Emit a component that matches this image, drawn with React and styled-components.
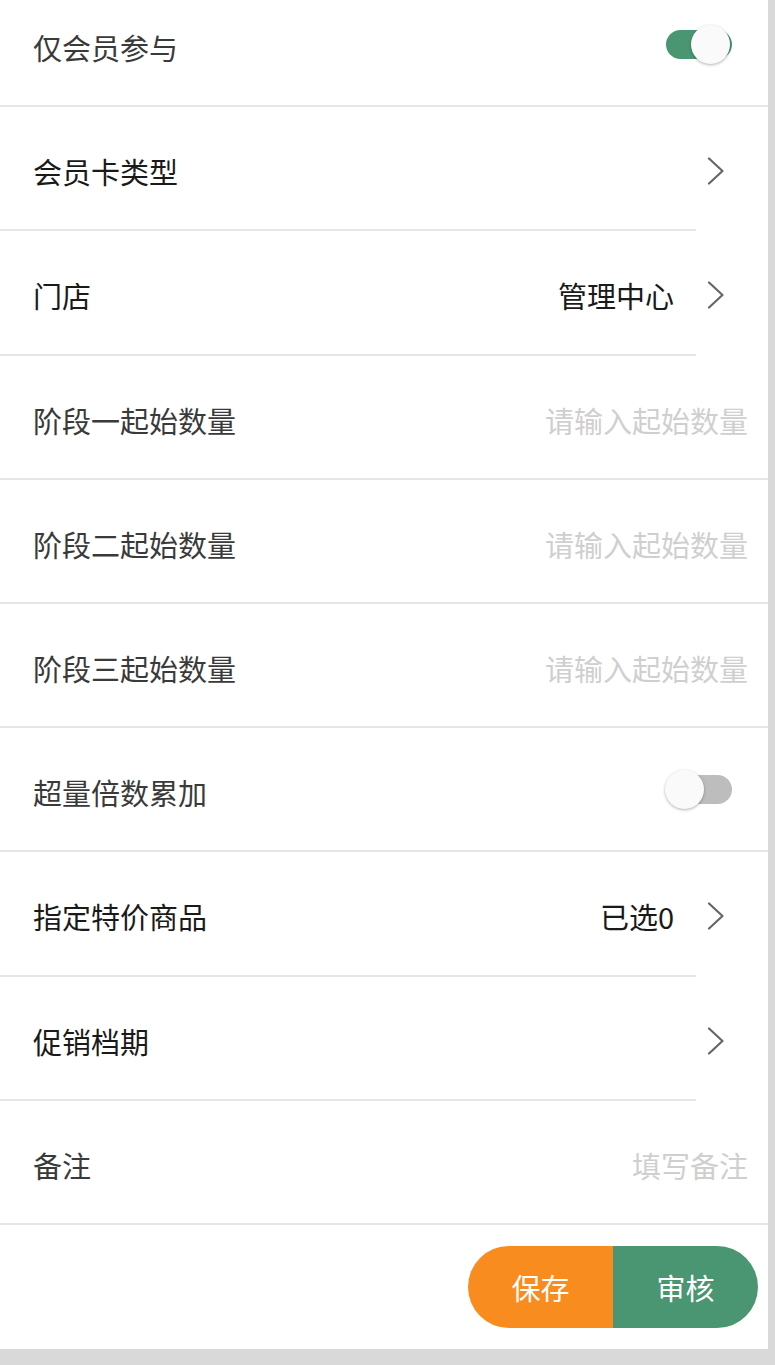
import React from "react";
import styled, { createGlobalStyle } from "styled-components";

const Global = createGlobalStyle`
  html, body {
    margin: 0;
    padding: 0;
    background: #d9d9d9;
    overflow: hidden;
  }
  body {
    font-family: "Noto Sans CJK SC", "Noto Sans", sans-serif;
  }
`;

const Panel = styled.div`
  width: 768px;
  background: #ffffff;
  overflow: hidden;
`;

const List = styled.div`
  margin-top: -17px;
  display: flex;
  flex-direction: column;
`;

const Item = styled.div`
  display: flex;
  flex-direction: column;
`;

const Row = styled.div`
  height: 122.2px;
  display: flex;
  align-items: center;
  padding: 6px 20px 0 33px;
  box-sizing: border-box;
`;

const Label = styled.span`
  flex: 1;
  font-size: 29px;
  color: ${(p) => (p.$strong ? "#1a1a1a" : "#3a3a3a")};
  white-space: nowrap;
`;

const Value = styled.span`
  font-size: 29px;
  color: #1a1a1a;
  margin-right: 33px;
  white-space: nowrap;
`;

const Field = styled.input`
  width: 320px;
  border: none;
  outline: none;
  background: transparent;
  padding: 0;
  text-align: right;
  font-family: inherit;
  font-size: 29px;
  color: #333;
  &::placeholder {
    color: #cfcfcf;
  }
`;

const Divider = styled.div`
  height: 2px;
  width: ${(p) => (p.$short ? "696px" : "100%")};
  background: #e6e6e6;
`;

const Chevron = styled.svg`
  width: 18px;
  height: 28px;
  margin-right: 23px;
  flex: none;
`;

const Switch = styled.div`
  position: relative;
  width: 68px;
  height: 42px;
  margin: -5px 16px 0 0;
  flex: none;
  display: flex;
  align-items: center;
`;

const Track = styled.div`
  width: 66px;
  height: 29px;
  margin-left: 2px;
  border-radius: 15px;
  background: ${(p) => (p.$on ? "#4a9672" : "#bdbdbd")};
`;

const Thumb = styled.div`
  position: absolute;
  top: 1.5px;
  left: ${(p) => (p.$on ? "27px" : "1px")};
  width: 39px;
  height: 39px;
  border-radius: 50%;
  background: #fafafa;
  box-shadow: 0 1px 3px rgba(0, 0, 0, 0.3);
`;

const Footer = styled.div`
  height: 124px;
  display: flex;
  align-items: center;
  justify-content: flex-end;
  padding-right: 10px;
`;

const ButtonGroup = styled.div`
  display: flex;
  height: 82px;
  border-radius: 41px;
  overflow: hidden;
`;

const ActionButton = styled.button`
  width: 145px;
  height: 82px;
  border: none;
  padding: 0;
  font-family: inherit;
  font-size: 29px;
  color: #ffffff;
  background: ${(p) => (p.$tone === "save" ? "#f98c1f" : "#4b9672")};
`;

const ChevronIcon = () => (
  <Chevron viewBox="0 0 18 28">
    <path d="M2 1.5 L15.5 14 L2 26.5" fill="none" stroke="#666" strokeWidth="2.2" strokeLinecap="round" strokeLinejoin="round" />
  </Chevron>
);

const Toggle = ({ on }) => (
  <Switch>
    <Track $on={on} />
    <Thumb $on={on} />
  </Switch>
);

const rows = [
  { label: "仅会员参与", type: "toggle", on: true },
  { label: "会员卡类型", type: "link", strong: true },
  { label: "门店", type: "link", value: "管理中心", strong: true },
  { label: "阶段一起始数量", type: "input", placeholder: "请输入起始数量" },
  { label: "阶段二起始数量", type: "input", placeholder: "请输入起始数量" },
  { label: "阶段三起始数量", type: "input", placeholder: "请输入起始数量" },
  { label: "超量倍数累加", type: "toggle", on: false },
  { label: "指定特价商品", type: "link", value: "已选0", strong: true },
  { label: "促销档期", type: "link", strong: true },
  { label: "备注", type: "input", placeholder: "填写备注" },
];

export default function App() {
  return (
    <>
      <Global />
      <Panel>
        <List>
          {rows.map((r) => (
            <Item key={r.label}>
              <Row>
                <Label $strong={r.strong}>{r.label}</Label>
                {r.type === "toggle" && <Toggle on={r.on} />}
                {r.type === "link" && r.value && <Value>{r.value}</Value>}
                {r.type === "link" && <ChevronIcon />}
                {r.type === "input" && <Field placeholder={r.placeholder} />}
              </Row>
              <Divider $short={r.type === "link"} />
            </Item>
          ))}
        </List>
        <Footer>
          <ButtonGroup>
            <ActionButton $tone="save">保存</ActionButton>
            <ActionButton $tone="audit">审核</ActionButton>
          </ButtonGroup>
        </Footer>
      </Panel>
    </>
  );
}
